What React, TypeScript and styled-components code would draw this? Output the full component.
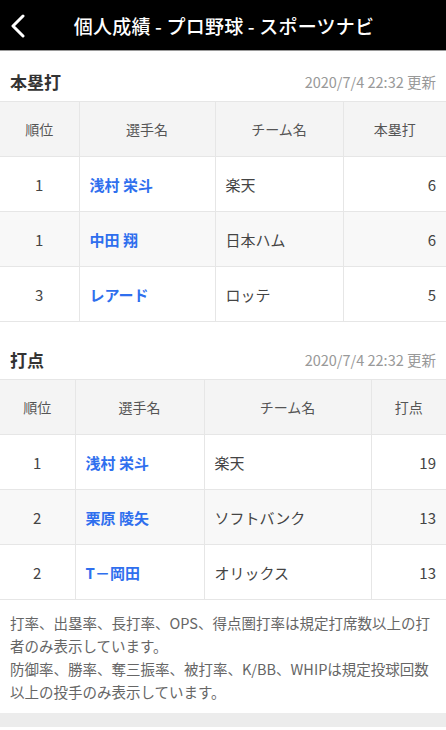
import React from 'react';
import styled, { createGlobalStyle } from 'styled-components';

const GlobalStyle = createGlobalStyle`
  html, body {
    margin: 0;
    padding: 0;
    background: #fff;
  }
  body {
    font-family: "Noto Sans CJK JP", "Noto Sans", sans-serif;
    color: #333;
  }
`;

const Page = styled.div`
  width: 446px;
  min-height: 730px;
  background: #fff;
`;

const TopBar = styled.header`
  height: 50px;
  background: #000;
  border-bottom: 1px solid #9a9a9a;
  display: flex;
  align-items: center;
  justify-content: center;
  position: relative;
`;

const BackButton = styled.div`
  position: absolute;
  left: 9px;
  top: 14px;
  width: 18px;
  height: 24px;
  display: flex;
`;

const Title = styled.h1`
  margin: 0;
  color: #fff;
  font-size: 19px;
  font-weight: 500;
  letter-spacing: 0.2px;
  padding-left: 2px;
`;

const Section = styled.section``;

const SectionHead = styled.div<{ top: number }>`
  display: flex;
  justify-content: space-between;
  align-items: center;
  height: 30px;
  padding: ${p => p.top}px 10px 5px 10px;
  box-sizing: content-box;
`;

const SectionTitle = styled.h2`
  margin: 0;
  font-size: 17px;
  font-weight: 700;
  color: #333;
`;

const Updated = styled.span`
  font-size: 14.5px;
  color: #999;
`;

const Table = styled.table`
  width: 100%;
  border-collapse: collapse;
  table-layout: fixed;
  border-top: 1px solid #e6e6e6;
`;

const Th = styled.th`
  height: 54px;
  padding: 0;
  background: #f4f4f4;
  font-size: 14px;
  font-weight: 400;
  color: #555;
  text-align: center;
  border: 1px solid #e6e6e6;
  border-top: none;
  &:first-child { border-left: none; }
  &:last-child { border-right: none; }
`;

const Row = styled.tr<{ striped?: boolean }>`
  background: ${p => (p.striped ? '#f8f8f8' : '#fff')};
`;

const Td = styled.td<{ align: 'left' | 'center' | 'right' }>`
  height: 54px;
  padding: 0 10px;
  font-size: 15px;
  color: #444;
  text-align: ${p => p.align};
  border: 1px solid #e6e6e6;
  &:first-child { border-left: none; }
  &:last-child { border-right: none; }
`;

const PlayerLink = styled.a`
  color: #2f6fee;
  font-weight: 700;
  font-size: 15px;
  text-decoration: none;
`;

const Notes = styled.div`
  padding: 11px 10px 10px 10px;
  font-size: 14.5px;
  line-height: 23px;
  color: #666;
`;

const BottomBand = styled.div`
  height: 14px;
  background: #ececec;
`;

type Entry = { rank: number; name: string; team: string; value: number };

type RankingProps = {
  title: string;
  stat: string;
  top: number;
  widths: number[];
  entries: Entry[];
};

const Ranking: React.FC<RankingProps> = ({ title, stat, top, widths, entries }) => (
  <Section>
    <SectionHead top={top}>
      <SectionTitle>{title}</SectionTitle>
      <Updated>2020/7/4 22:32 更新</Updated>
    </SectionHead>
    <Table>
      <colgroup>
        {widths.map((w, i) => (
          <col key={i} style={{ width: w }} />
        ))}
      </colgroup>
      <thead>
        <tr>
          <Th>順位</Th>
          <Th>選手名</Th>
          <Th>チーム名</Th>
          <Th>{stat}</Th>
        </tr>
      </thead>
      <tbody>
        {entries.map((e, i) => (
          <Row key={e.name} striped={i % 2 === 1}>
            <Td align="center">{e.rank}</Td>
            <Td align="left">
              <PlayerLink href="#">{e.name}</PlayerLink>
            </Td>
            <Td align="left">{e.team}</Td>
            <Td align="right">{e.value}</Td>
          </Row>
        ))}
      </tbody>
    </Table>
  </Section>
);

const homeRuns: Entry[] = [
  { rank: 1, name: '浅村 栄斗', team: '楽天', value: 6 },
  { rank: 1, name: '中田 翔', team: '日本ハム', value: 6 },
  { rank: 3, name: 'レアード', team: 'ロッテ', value: 5 },
];

const rbis: Entry[] = [
  { rank: 1, name: '浅村 栄斗', team: '楽天', value: 19 },
  { rank: 2, name: '栗原 陵矢', team: 'ソフトバンク', value: 13 },
  { rank: 2, name: 'T－岡田', team: 'オリックス', value: 13 },
];

const App: React.FC = () => (
  <Page>
    <GlobalStyle />
    <TopBar>
      <BackButton>
        <svg width="18" height="24" viewBox="0 0 18 24">
          <path d="M14 2 L4 12 L14 22" fill="none" stroke="#fff" strokeWidth="3" strokeLinecap="round" strokeLinejoin="round" />
        </svg>
      </BackButton>
      <Title>個人成績 - プロ野球 - スポーツナビ</Title>
    </TopBar>
    <Ranking title="本塁打" stat="本塁打" top={15} widths={[79, 136, 128, 103]} entries={homeRuns} />
    <Ranking title="打点" stat="打点" top={22} widths={[75, 129, 167, 75]} entries={rbis} />
    <Notes>
      打率、出塁率、長打率、OPS、得点圏打率は規定打席数以上の打者のみ表示しています。
      <br />
      防御率、勝率、奪三振率、被打率、K/BB、WHIPは規定投球回数以上の投手のみ表示しています。
    </Notes>
    <BottomBand />
  </Page>
);

export default App;
